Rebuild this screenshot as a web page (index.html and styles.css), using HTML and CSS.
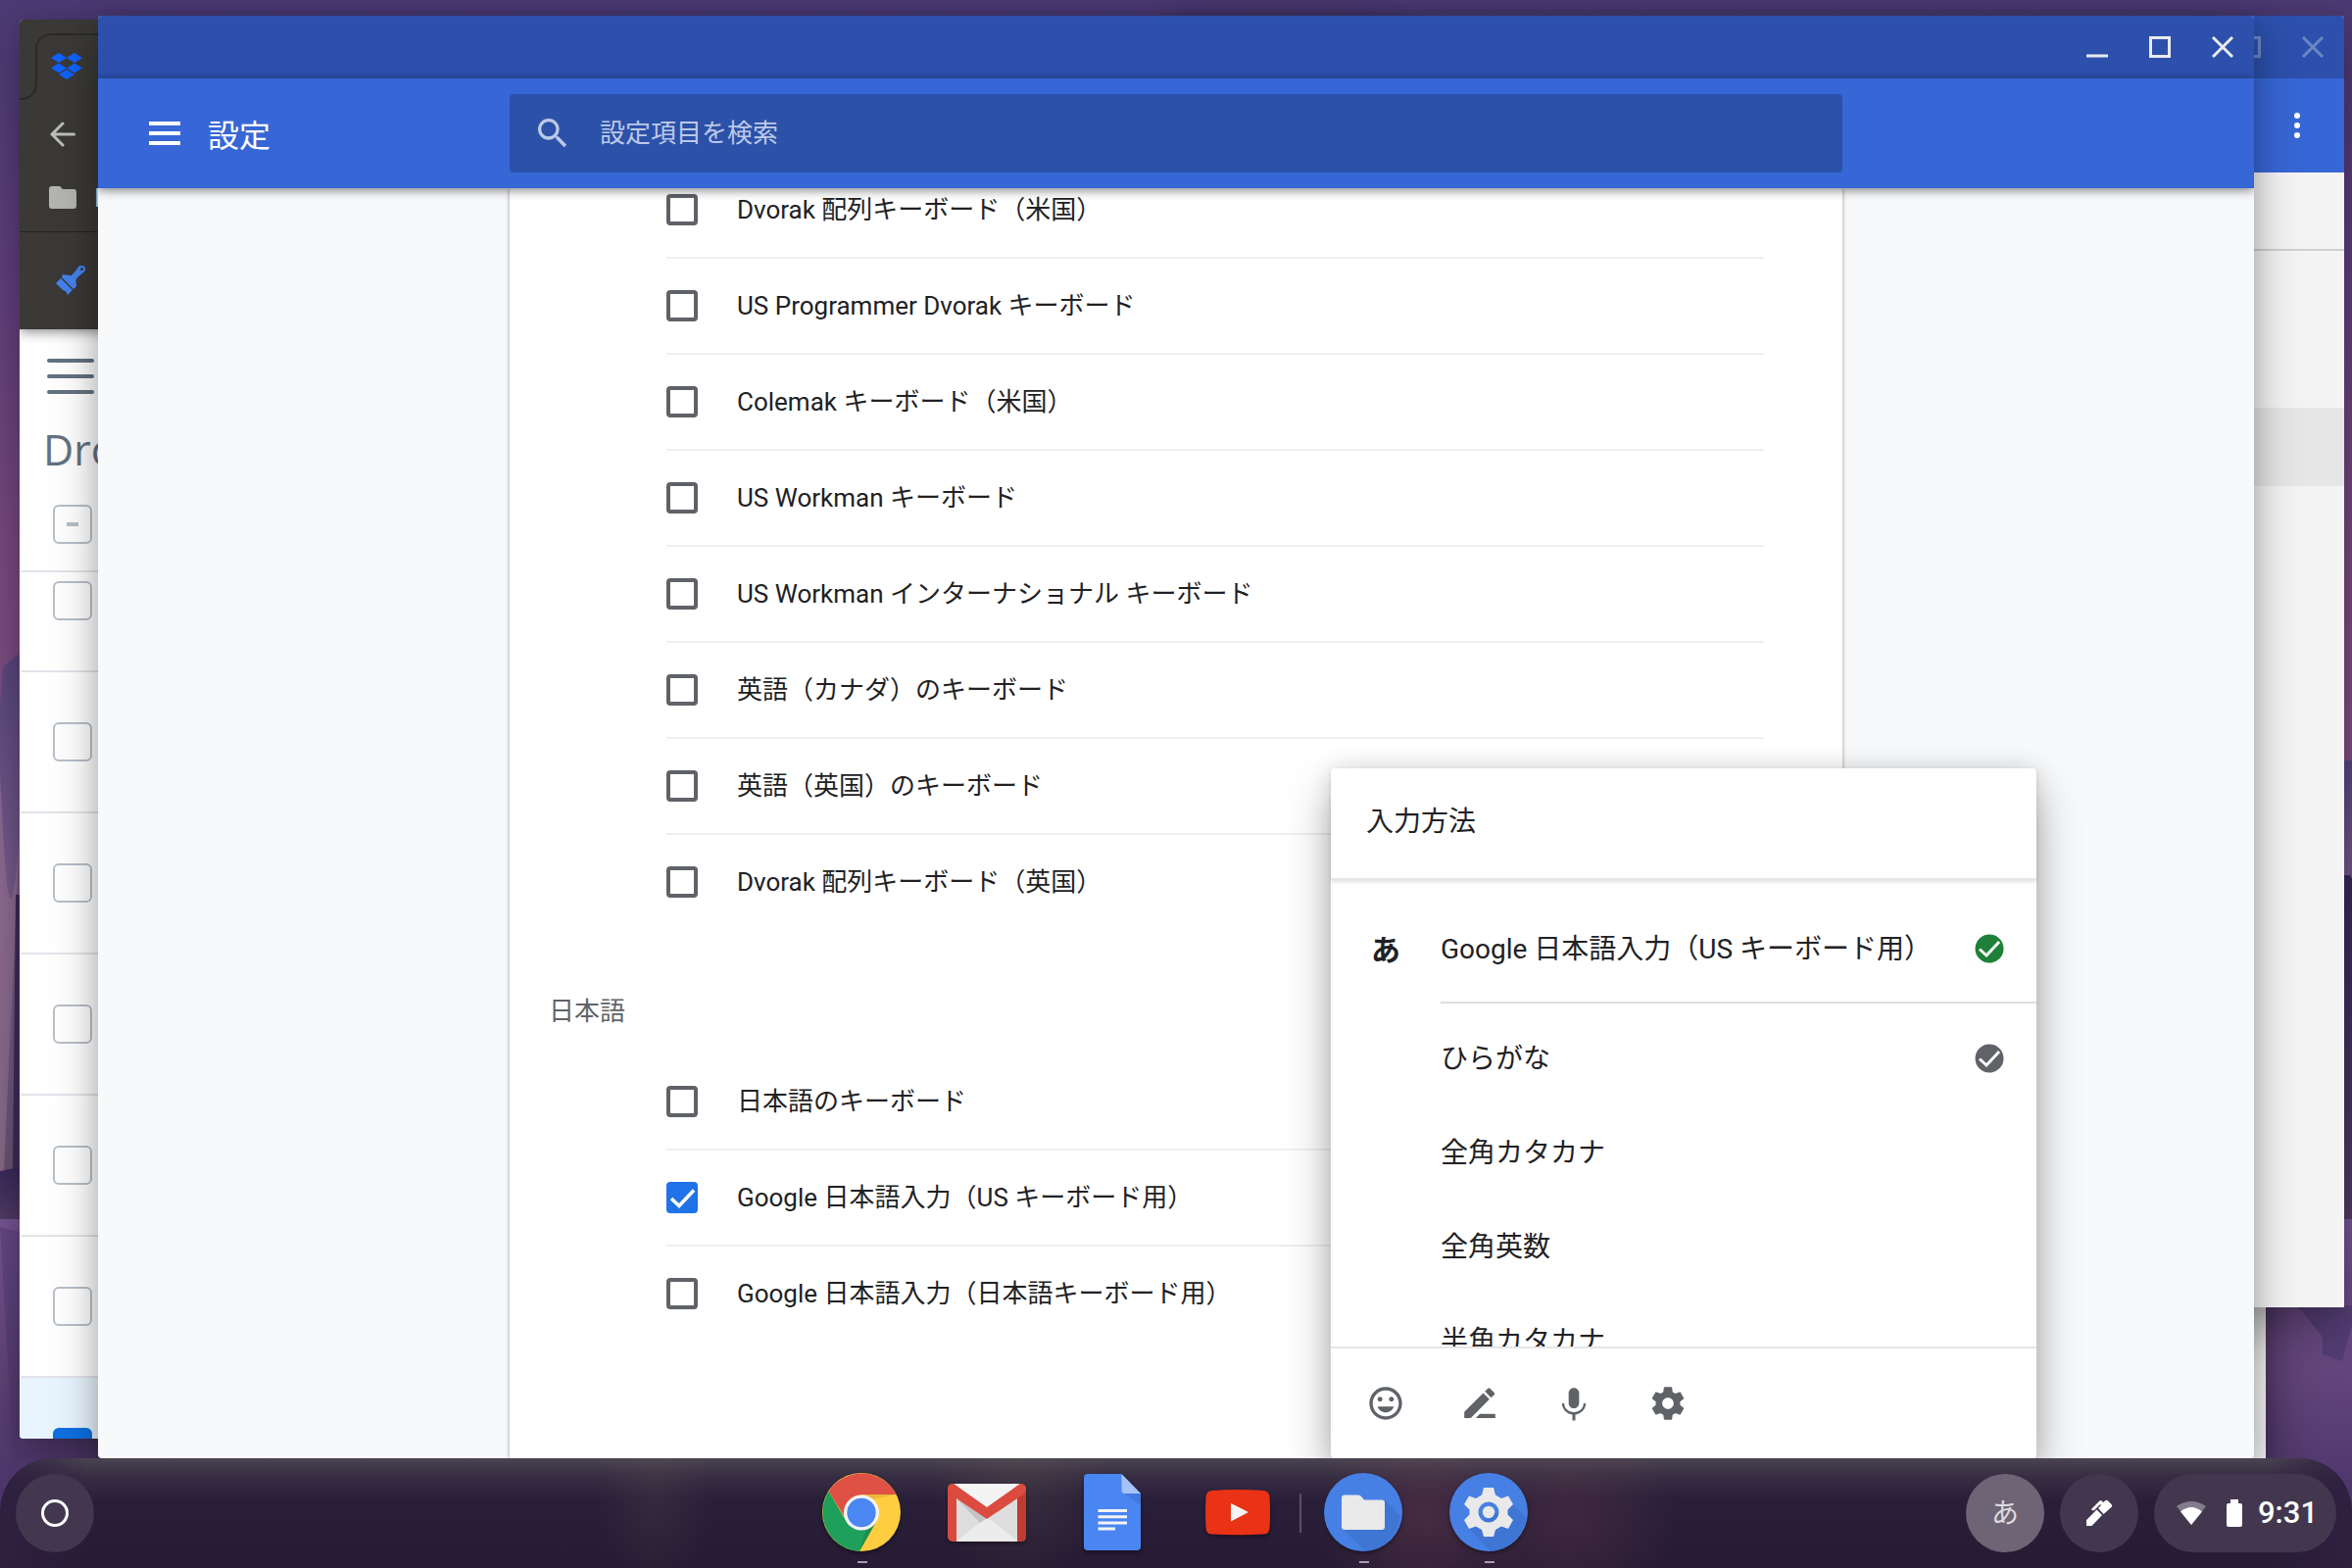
FILE: index.html
```html
<!DOCTYPE html>
<html lang="ja">

<head>
    <meta charset="UTF-8">
    <meta name="viewport" content="width=device-width, initial-scale=1.0">
    <title>設定</title>
    <link rel="stylesheet" href="styles.css">
</head>

<body>
    <div class="desktop">
        <svg class="wallpaper" viewBox="0 0 2400 1600">
            <defs>
                <linearGradient id="sky" x1="0" y1="0" x2="0" y2="1">
                    <stop offset="0" stop-color="#4b3a74" />
                    <stop offset=".2" stop-color="#64417e" />
                    <stop offset=".35" stop-color="#7a4a80" />
                    <stop offset=".5" stop-color="#824f86" />
                    <stop offset=".72" stop-color="#9d7a93" />
                </linearGradient>
                <linearGradient id="hill" x1="0" y1="0" x2="0" y2="1">
                    <stop offset="0" stop-color="#5a4780" />
                    <stop offset=".5" stop-color="#7e5f90" />
                    <stop offset="1" stop-color="#6a5472" />
                </linearGradient>
                <linearGradient id="dark" x1="0" y1="0" x2="0" y2="1">
                    <stop offset="0" stop-color="#38285a" />
                    <stop offset="1" stop-color="#523c66" />
                </linearGradient>
                <linearGradient id="lake" x1="0" y1="0" x2="0" y2="1">
                    <stop offset="0" stop-color="#7a5696" />
                    <stop offset=".45" stop-color="#62457a" />
                    <stop offset=".85" stop-color="#493369" />
                </linearGradient>
            </defs>
            <rect width="2400" height="1600" fill="url(#sky)" />
            <path d="M3 680 20 667V1195H0V720Z" fill="url(#hill)" />
            <path d="M0 790C6 900 10 980 20 850L4 1195H0Z" fill="#9d7898" opacity=".6" />
            <path d="M2380 776H2400V1100H2380Z" fill="url(#hill)" />
            <path d="M16 913H30V1195H13Z" fill="#3f2d5c" />
            <path d="M2380 893H2398L2400 897V1244H2380Z" fill="url(#dark)" />
            <path d="M0 1195 40 1187V1244H0Z" fill="url(#dark)" />
            <rect y="1244" width="2400" height="356" fill="url(#lake)" />
            <path d="M0 1252 20 1257V1490H14Z" fill="#4d3674" opacity=".4" />
            <path d="M2344 1332 2370 1364V1382L2390 1389 2400 1352V1332Z" fill="#4f3a72" opacity=".75" />
        </svg>

        <!-- Dropbox -->
        <section class="window dropbox">
            <div class="browser-top">
                <svg class="tab-line" viewBox="0 0 90 90">
                    <path d="M0 81H2A15 15 0 0 0 17 66V30A15 15 0 0 1 32 15H90" />
                </svg>
                <svg class="dropbox-logo" viewBox="0 0 32 27">
                    <path d="M8 0 16 5 8 10 0 5ZM24 0 32 5 24 10 16 5ZM8 10.4 16 15.4 8 20.4 0 15.4ZM24 10.4 32 15.4 24 20.4 16 15.4ZM16 17 24 22 16 27 8 22Z" />
                </svg>
                <svg class="back" viewBox="0 0 26 26">
                    <path d="M24.5 13H2M13 2 2 13 13 24" />
                </svg>
                <div class="bookmarks">
                    <svg viewBox="0 0 28 24">
                        <path d="M3 0H11L14 3H25A3 3 0 0 1 28 6V20A3 3 0 0 1 25 23H3A3 3 0 0 1 0 20V3A3 3 0 0 1 3 0Z" />
                    </svg>
                    <span>I</span>
                </div>
                <svg class="brush" viewBox="0 0 30 30">
                    <path fill-rule="evenodd" d="M7 9 10 9.5 14 10C16 11 17 9 22 3C23 0 27-1 29 1C31 3 30 6 27.500 7.500C22 12 20 14 20.500 16L21 21 18 24 6 12ZM25 3.500A1.500 1.500 0 1 0 28 3.500A1.500 1.500 0 1 0 25 3.500ZM5 13 17 25 12 30 10 26C8 26 6 24 4 22L0 18Z" />
                </svg>
            </div>
            <div class="dropbox-body">
                <div class="bars"><i></i><i></i><i></i></div>
                <div class="brand">Dropbox</div>
                <div class="file head"><span class="box minus"></span></div>
                <div class="file first"><span class="box"></span></div>
                <div class="file"><span class="box"></span></div>
                <div class="file"><span class="box"></span></div>
                <div class="file"><span class="box"></span></div>
                <div class="file"><span class="box"></span></div>
                <div class="file"><span class="box"></span></div>
                <div class="file selected"><span class="box on"></span></div>
            </div>
        </section>

        <section class="window plain"></section>

        <!-- ファイル -->
        <section class="window files">
            <div class="titlebar dim">
                <svg viewBox="0 0 22 22"><path d="M1.500 1.500H20.500V20.500H1.500Z" /></svg>
                <svg viewBox="0 0 22 22"><path d="M1 1 21 21M21 1 1 21" /></svg>
            </div>
            <div class="files-toolbar">
                <div class="dots"><i></i><i></i><i></i></div>
            </div>
            <div class="files-head"></div>
            <div class="files-row"></div>
        </section>

        <!-- 設定 -->
        <section class="window settings">
            <div class="titlebar">
                <svg viewBox="0 0 22 22"><path d="M0 20H22" /></svg>
                <svg viewBox="0 0 22 22"><path d="M1.500 1.500H20.500V20.500H1.500Z" /></svg>
                <svg viewBox="0 0 22 22"><path d="M1 1 21 21M21 1 1 21" /></svg>
            </div>
            <header class="toolbar">
                <div class="menu"><i></i><i></i><i></i></div>
                <h1>設定</h1>
                <div class="search">
                    <svg viewBox="0 0 24 24">
                        <path d="M15.500 14h-.79l-.28-.27A6.471 6.471 0 0 0 16 9.500 6.500 6.500 0 1 0 9.500 16c1.610 0 3.090-.59 4.230-1.570l.27.28v.79l5 4.990L20.490 19l-4.990-5zm-6 0C7.010 14 5 11.990 5 9.500S7.010 5 9.500 5 14 7.010 14 9.500 11.990 14 9.500 14z" />
                    </svg>
                    <span>設定項目を検索</span>
                </div>
            </header>
            <main class="content">
                <div class="card">
                    <ul class="list">
                        <li><span class="check"></span><label>Dvorak 配列キーボード（米国）</label></li>
                        <li><span class="check"></span><label>US Programmer Dvorak キーボード</label></li>
                        <li><span class="check"></span><label>Colemak キーボード（米国）</label></li>
                        <li><span class="check"></span><label>US Workman キーボード</label></li>
                        <li><span class="check"></span><label>US Workman インターナショナル キーボード</label></li>
                        <li><span class="check"></span><label>英語（カナダ）のキーボード</label></li>
                        <li><span class="check"></span><label>英語（英国）のキーボード</label></li>
                        <li><span class="check"></span><label>Dvorak 配列キーボード（英国）</label></li>
                    </ul>
                    <h2>日本語</h2>
                    <ul class="list">
                        <li><span class="check"></span><label>日本語のキーボード</label></li>
                        <li><span class="check checked"><svg viewBox="0 0 32 32"><path d="M5 17 13 24.500 28 8.500" /></svg></span><label>Google 日本語入力（US キーボード用）</label></li>
                        <li><span class="check"></span><label>Google 日本語入力（日本語キーボード用）</label></li>
                    </ul>
                </div>
            </main>
        </section>

        <!-- 入力方法 -->
        <section class="ime">
            <header>入力方法</header>
            <div class="ime-list">
                <div class="ime-current">
                    <b>あ</b>
                    <div class="ime-name">
                        <span>Google 日本語入力（US キーボード用）</span>
                        <svg viewBox="0 0 32 32">
                            <circle cx="16" cy="16" r="16" fill="#1e8039" />
                            <path d="M6 16.500 13 23 26 9" />
                        </svg>
                    </div>
                </div>
                <div class="ime-mode"><span>ひらがな</span>
                    <svg viewBox="0 0 32 32">
                        <circle cx="16" cy="16" r="16" fill="#5f6368" />
                        <path d="M6 16.500 13 23 26 9" />
                    </svg>
                </div>
                <div class="ime-mode"><span>全角カタカナ</span></div>
                <div class="ime-mode"><span>全角英数</span></div>
                <div class="ime-mode"><span>半角カタカナ</span></div>
            </div>
            <footer>
                <svg viewBox="0 0 24 24">
                    <path d="M11.990 2C6.470 2 2 6.480 2 12s4.470 10 9.990 10C17.520 22 22 17.520 22 12S17.520 2 11.990 2zM12 20c-4.420 0-8-3.580-8-8s3.580-8 8-8 8 3.580 8 8-3.580 8-8 8zm3.500-9c.83 0 1.500-.67 1.500-1.500S16.330 8 15.500 8 14 8.670 14 9.500s.67 1.500 1.500 1.500zm-7 0c.83 0 1.500-.67 1.500-1.500S9.330 8 8.500 8 7 8.670 7 9.500 7.670 11 8.500 11zM7 14c.8 2.200 2.700 3.600 5 3.600s4.200-1.400 5-3.600z" />
                </svg>
                <svg viewBox="0 0 24 24">
                    <path d="M2.500 17.300 14.100 5.700 17.900 9.500 6.500 21H2.500ZM15.100 4.700 17 2.800Q17.600 2.300 18.200 2.800L20.900 5.500Q21.400 6.100 20.900 6.700L18.900 8.500ZM12 18.500H21.500V21H9.500Z" />
                </svg>
                <svg viewBox="0 0 24 24">
                    <path d="M12 15c1.800 0 3.200-1.400 3.200-3.200V5.700c0-1.700-1.400-3.200-3.200-3.200S8.800 4 8.800 5.700v6.100C8.800 13.600 10.200 15 12 15zm5.900-3c0 3.200-2.700 5.400-5.900 5.400S6.100 15.200 6.100 12H4.700c0 3.600 2.900 6.400 6.400 6.900v3.600h1.800v-3.600c3.500-.5 6.400-3.300 6.400-6.900z" />
                </svg>
                <svg viewBox="0 0 24 24">
                    <path d="M19.430 12.980c.04-.32.07-.64.07-.98s-.03-.66-.07-.98l2.110-1.650c.19-.15.24-.42.12-.64l-2-3.460c-.12-.22-.39-.3-.61-.22l-2.490 1c-.52-.4-1.080-.73-1.690-.98l-.38-2.650A.488.488 0 0 0 14 2h-4c-.25 0-.46.180-.49.420l-.38 2.650c-.61.250-1.170.59-1.690.98l-2.490-1c-.23-.09-.49 0-.61.220l-2 3.460c-.13.220-.07.490.12.640l2.110 1.650c-.04.320-.07.650-.07.980s.03.660.07.980l-2.110 1.650c-.19.150-.24.420-.12.640l2 3.460c.12.220.39.300.61.220l2.490-1c.52.400 1.080.73 1.690.98l.38 2.650c.03.240.24.420.49.420h4c.25 0 .46-.18.49-.42l.38-2.650c.61-.25 1.170-.59 1.690-.98l2.490 1c.23.090.49 0 .61-.22l2-3.460c.12-.22.07-.49-.12-.64l-2.110-1.650zM12 15.500c-1.930 0-3.500-1.570-3.500-3.500s1.570-3.500 3.500-3.500 3.500 1.570 3.500 3.500-1.570 3.500-3.500 3.500z" />
                </svg>
            </footer>
        </section>

        <!-- シェルフ -->
        <nav class="shelf">
            <div class="launcher"><span></span></div>
            <div class="apps">
                <div class="app running">
                    <svg viewBox="0 0 80 80">
                        <circle cx="40" cy="40" r="40" fill="#ffcd40" />
                        <path d="M6.700 18.700 24.400 49H55.600L38 80A40 40 0 0 1 6.700 18.700Z" fill="#1fa05a" />
                        <path d="M6.700 18.700A40 40 0 0 1 75.700 22H40L22 43.500Z" fill="#df5145" />
                        <path d="M40 22H76L50 27Z" fill="#d9a52e" opacity=".5" />
                        <path d="M55 50 45 57 38 80Z" fill="#148048" opacity=".5" />
                        <circle cx="40" cy="40.500" r="18" fill="#f4f4f4" />
                        <circle cx="40" cy="40.500" r="14.700" fill="#4a87f2" />
                    </svg>
                </div>
                <div class="app">
                    <svg viewBox="0 0 80 80">
                        <rect y="11" width="80" height="59" rx="5" fill="#d94b3f" />
                        <path d="M71 16H80V65Q80 70 75 70H71Z" fill="#bf3c31" />
                        <path d="M9 16H71V70H9Z" fill="#dedede" />
                        <path d="M9 69.500 40 45 71 69.500Z" fill="#ececec" />
                        <path d="M9 26 40 46 33 51Z" fill="#c4c4c4" />
                        <path d="M6 11H74L40 36Z" fill="#f4f4f4" />
                        <path d="M0 17Q0 11 6 11L40 35 74 11Q80 11 80 17 80 20 77 22L40 47 3 22Q0 20 0 17Z" fill="#dc4b3f" />
                    </svg>
                </div>
                <div class="app">
                    <svg viewBox="0 0 80 80">
                        <path d="M15 1H49L69 21V75Q69 79 65 79H15Q11 79 11 75V5Q11 1 15 1Z" fill="#4a86f2" />
                        <path d="M52 21H69V33Z" fill="#3c72d0" opacity=".6" />
                        <path d="M49.500 1 69 21H53Q49.500 21 49.500 17.500Z" fill="#a5c3f9" />
                        <path d="M25.500 38.500H55M25.500 44.700H55M25.500 51H55M25.500 57H43" stroke="#f4f4f4" stroke-width="3" />
                    </svg>
                </div>
                <div class="app">
                    <svg viewBox="0 0 80 80">
                        <path d="M13 18Q40 16 67 18 72 19 72.500 24 73.500 40 72.500 56 72 62 67 62.500 40 64 13 62.500 8 62 7.500 56 6.500 40 7.500 24 8 19 13 18Z" fill="#e93216" />
                        <path d="M33 31 51 40 33 49.500Z" fill="#f6f6f6" />
                    </svg>
                </div>
                <span class="divider"></span>
                <div class="app running">
                    <svg viewBox="0 0 80 80">
                        <circle cx="40" cy="40" r="40" fill="#4680e4" />
                        <path d="M62 28 78 44A40 40 0 0 1 42 80L20 58Z" fill="#3b6fca" opacity=".6" />
                        <path d="M21 22.500H35Q37 22.500 38 24L41 27.500H59Q62 27.500 62 30.500V55Q62 58 59 58H21Q18 58 18 55V25.500Q18 22.500 21 22.500Z" fill="#e9e9e9" />
                    </svg>
                </div>
                <div class="app running">
                    <svg viewBox="0 0 80 80">
                        <circle cx="40" cy="40" r="40" fill="#4680e4" />
                        <path d="M64 32 79 46A40 40 0 0 1 42 80L20 57Z" fill="#3b6fca" opacity=".6" />
                        <path fill-rule="evenodd" fill="#e9e9e9" d="M35 15H45L47 22.500 53 26 60 23.500 65 32 59.500 37.500V42.500L65 48 60 57 53 54.500 47 58 45 65H35L33 58 27 54.500 20 57 15 48 20.500 42.500V37.500L15 32 20 23.500 27 26 33 22.500ZM29.500 40A10.500 10.500 0 1 0 50.500 40A10.500 10.500 0 1 0 29.500 40Z" />
                        <circle cx="40" cy="40" r="6.200" fill="#e9e9e9" />
                    </svg>
                </div>
            </div>
            <div class="tray">
                <div class="round lang">あ</div>
                <div class="round">
                    <svg viewBox="0 0 28 28">
                        <path d="M1 21 11.500 10.500 17 16 6.500 27H1ZM13 9 16 6 15 5 9 11Q7 12 6 10L14 2Q15.500 0 17 2L18 3 20 1.500Q21.500 0 23 1.500L26.500 5Q28 6.500 26.500 8L18.500 15Z" />
                    </svg>
                </div>
                <div class="status">
                    <svg class="wifi" viewBox="0 0 30 24">
                        <path d="M0 5Q15-5 30 5L15 24Z" opacity=".35" />
                        <path d="M4 10.500Q15 1.500 26 10.500L15 24Z" />
                    </svg>
                    <svg class="battery" viewBox="0 0 16 28">
                        <path d="M4 0H12V4H14Q16 4 16 6V26Q16 28 14 28H2Q0 28 0 26V6Q0 4 2 4H4Z" />
                    </svg>
                    <span>9:31</span>
                </div>
            </div>
        </nav>
    </div>
</body>

</html>
```
FILE: styles.css
```css
:root {
    --blue: #3767d6;
    --blue-dark: #2c50ac;
    --text: #212124;
    --grey: #5f6368;
    --window-shadow: 0 24px 48px rgba(0, 0, 0, .3), 0 0 24px rgba(0, 0, 0, .12);
}

* {
    margin: 0;
    padding: 0;
    box-sizing: border-box;
}

body {
    font-family: Roboto, "Noto Sans CJK JP", sans-serif;
    color: var(--text);
    background: #4b3a74;
}

svg {
    display: block;
    flex: none;
}

.desktop {
    position: relative;
    width: 2400px;
    height: 1600px;
    overflow: hidden;
}

.wallpaper {
    width: 2400px;
    height: 1600px;
}

.window {
    position: absolute;
    overflow: hidden;
    border-radius: 4px;
    box-shadow: var(--window-shadow);
}

/* Dropbox window */
.dropbox {
    left: 20px;
    top: 20px;
    width: 1400px;
    height: 1448px;
    background: #fff;
}

.browser-top {
    position: relative;
    height: 316px;
    background: #3a3937;
    box-shadow: 0 2px 12px rgba(0, 0, 0, .5);
    padding: 34px 0 0 30px;
}

.tab-line {
    position: absolute;
    left: 0;
    top: 0;
    width: 90px;
    height: 90px;
    fill: none;
    stroke: #2b2a29;
    stroke-width: 2;
}

.dropbox-logo {
    width: 32px;
    height: 27px;
    margin-left: 2px;
    fill: #0f62fe;
}

.back {
    width: 26px;
    height: 26px;
    margin: 43px 0 0 1px;
    fill: none;
    stroke: #bdbdbc;
    stroke-width: 3;
    stroke-linecap: round;
}

.bookmarks {
    display: flex;
    align-items: center;
    gap: 18px;
    height: 87px;
    margin-left: -30px;
    padding: 18px 0 0 30px;
    border-bottom: 1px solid #242423;
    color: #e8e8e8;
    font-size: 26px;
}

.bookmarks svg {
    width: 28px;
    height: 24px;
    fill: #b4b4b2;
}

.brush {
    width: 30px;
    height: 30px;
    margin: 34px 0 0 7px;
    fill: #4582ec;
}

.bars {
    display: flex;
    flex-direction: column;
    gap: 12px;
    padding: 30px 0 0 28px;
}

.bars i {
    width: 48px;
    height: 4px;
    border-radius: 2px;
    background: #637282;
}

.brand {
    height: 93px;
    padding: 27px 0 0 24px;
    font-family: "Open Sans", sans-serif;
    font-size: 43px;
    line-height: 60px;
    color: #637282;
}

.file {
    display: flex;
    align-items: center;
    height: 144px;
    margin-left: 1px;
    padding-left: 33px;
    border-bottom: 2px solid #e3e3ea;
}

.file.head {
    height: 89px;
    padding-top: 20px;
    align-items: flex-start;
}

.file.first {
    height: 102px;
    padding-top: 9px;
    align-items: flex-start;
}

.file.selected {
    align-items: flex-start;
    padding-top: 51px;
    margin-left: 0;
    padding-left: 34px;
    background: #e8f4fe;
}

.box {
    display: flex;
    align-items: center;
    justify-content: center;
    width: 40px;
    height: 40px;
    border: 2px solid #b7bfc9;
    border-radius: 6px;
}

.box.minus::before {
    content: "";
    width: 12px;
    height: 4px;
    background: #b7bfc9;
}

.box.on {
    border-color: #0f70e0;
    background: #0f70e0;
}

.plain {
    left: 1500px;
    top: 900px;
    width: 812px;
    height: 588px;
    border-radius: 0;
    background: #f5f5f5;
}

/* Files window */
.files {
    left: 1200px;
    top: 16px;
    width: 1192px;
    height: 1318px;
    border-radius: 4px 4px 0 0;
    background: #f4f4f4;
}

.titlebar {
    display: flex;
    align-items: center;
    justify-content: flex-end;
    gap: 42px;
    height: 64px;
    padding-right: 21px;
    background: var(--blue-dark);
}

.titlebar svg {
    width: 22px;
    height: 22px;
    overflow: visible;
    fill: none;
    stroke: #e9ebf0;
    stroke-width: 3;
}

.titlebar.dim svg {
    opacity: .35;
}

.files-toolbar {
    display: flex;
    justify-content: flex-end;
    height: 96px;
    padding: 35px 45px 0 0;
    background: var(--blue);
}

.dots {
    display: flex;
    flex-direction: column;
    gap: 4px;
}

.dots i {
    width: 6px;
    height: 6px;
    border-radius: 50%;
    background: #fff;
}

.files-head {
    height: 80px;
    border-bottom: 2px solid #cfcfcf;
}

.files-row {
    height: 80px;
    margin-top: 160px;
    background: #e6e6e6;
}

/* Settings window */
.settings {
    display: flex;
    flex-direction: column;
    left: 100px;
    top: 16px;
    width: 2200px;
    height: 1472px;
    background: #f8f9fb;
}

.toolbar {
    position: relative;
    display: flex;
    align-items: center;
    flex: none;
    height: 112px;
    padding-left: 52px;
    background: var(--blue);
    box-shadow: 0 2px 10px rgba(0, 0, 0, .5);
}

.menu {
    display: flex;
    flex-direction: column;
    gap: 6px;
    width: 32px;
}

.menu i {
    height: 4px;
    background: #fff;
}

.toolbar h1 {
    width: 336px;
    padding-left: 28px;
    font-size: 32px;
    font-weight: 400;
    color: #fff;
}

.search {
    display: flex;
    align-items: center;
    width: 1360px;
    height: 80px;
    padding-left: 24px;
    border-radius: 4px;
    background: #2c51a8;
    font-size: 26px;
    color: #bcc9e8;
}

.search svg {
    width: 40px;
    height: 40px;
    margin-right: 28px;
    fill: #bcc9e8;
}

.search span {
    padding-bottom: 5px;
}

.content {
    flex: 1;
    display: flex;
    justify-content: center;
    overflow: hidden;
}

.card {
    width: 1360px;
    background: #fff;
    box-shadow: 0 0 4px rgba(0, 0, 0, .4);
}

.list {
    margin-left: 160px;
    width: 1120px;
    list-style: none;
    font-size: 26px;
}

.list:first-child {
    margin-top: -28px;
}

.list li {
    display: flex;
    align-items: center;
    gap: 40px;
    height: 98px;
    border-top: 2px solid #efefef;
}

.list li:first-child {
    border-top-color: transparent;
}

.list label {
    padding-bottom: 5px;
}

.check {
    width: 32px;
    height: 32px;
    border: 4px solid var(--grey);
    border-radius: 4px;
}

.check.checked {
    border: none;
    background: #1f72e8;
}

.check svg {
    fill: none;
    stroke: #fff;
    stroke-width: 3.6;
}

.card h2 {
    height: 126px;
    padding: 64px 0 0 40px;
    font-size: 26px;
    line-height: 40px;
    font-weight: 400;
    color: var(--grey);
}

/* Input method menu */
.ime {
    position: absolute;
    left: 1358px;
    top: 784px;
    width: 720px;
    height: 704px;
    display: flex;
    flex-direction: column;
    border-radius: 4px;
    background: #fff;
    box-shadow: var(--window-shadow);
    font-size: 28px;
}

.ime header {
    display: flex;
    align-items: center;
    height: 114px;
    padding: 0 36px 8px;
    border-bottom: 2px solid #e6e6e6;
    box-shadow: 0 2px 4px rgba(0, 0, 0, .12);
}

.ime-list {
    height: 476px;
    overflow: hidden;
}

.ime-list span {
    padding-bottom: 4px;
}

.ime svg {
    width: 32px;
    height: 32px;
    fill: none;
    stroke: #fff;
    stroke-width: 3;
}

.ime-current {
    display: flex;
    align-items: center;
    height: 126px;
    padding-left: 41px;
}

.ime-current b {
    width: 71px;
    padding-top: 11px;
    font-size: 30px;
}

.ime-name {
    flex: 1;
    display: flex;
    align-items: center;
    justify-content: space-between;
    height: 126px;
    padding: 16px 32px 0 0;
    border-bottom: 2px solid #dedede;
}

.ime-mode {
    display: flex;
    align-items: center;
    justify-content: space-between;
    height: 96px;
    padding: 0 32px 0 112px;
}

.ime-current + .ime-mode {
    margin-top: 8px;
}

.ime footer {
    display: flex;
    align-items: center;
    gap: 56px;
    height: 114px;
    padding: 0 0 0 36px;
    border-top: 2px solid #e6e6e6;
}

.ime footer svg {
    width: 40px;
    height: 40px;
    fill: var(--grey);
    stroke: none;
}

/* Shelf */
.shelf {
    position: absolute;
    left: 0;
    bottom: 0;
    display: flex;
    justify-content: space-between;
    width: 2400px;
    height: 112px;
    padding: 16px;
    border-radius: 54px 54px 0 0;
    background:
        radial-gradient(ellipse 60px 100px at 668px 40px, rgba(110, 95, 85, .16), transparent),
        radial-gradient(ellipse 90px 100px at 1040px 30px, rgba(110, 95, 75, .22), transparent),
        radial-gradient(ellipse 110px 110px at 1455px 60px, rgba(125, 70, 85, .34), transparent),
        radial-gradient(ellipse 110px 110px at 1600px 60px, rgba(125, 70, 85, .26), transparent),
        linear-gradient(90deg, #2f2040 0, transparent 90px, transparent 2310px, #2f2040 100%),
        linear-gradient(#4a4452 0, #372e43 18px, #2a1f39 42px, #271b34 100%);
}

.launcher,
.round {
    display: flex;
    align-items: center;
    justify-content: center;
    width: 80px;
    height: 80px;
    border-radius: 50%;
    background: #42374f;
}

.launcher span {
    width: 28px;
    height: 28px;
    border: 3px solid #fff;
    border-radius: 50%;
}

.apps {
    display: flex;
    gap: 48px;
    margin: -1px 0 0 295px;
}

.app {
    position: relative;
    width: 80px;
    height: 80px;
}

.app svg {
    width: 80px;
    height: 80px;
    filter: drop-shadow(0 2px 2px rgba(0, 0, 0, .4));
}

.app.running::after {
    content: "";
    position: absolute;
    left: 36px;
    top: 90px;
    width: 10px;
    height: 2px;
    background: #a49fab;
}

.divider {
    width: 2px;
    height: 40px;
    margin: 21px -25px 0;
    background: #5b5265;
}

.tray {
    display: flex;
    gap: 16px;
}

.round svg {
    width: 28px;
    height: 28px;
    fill: #fff;
}

.round.lang {
    padding-bottom: 4px;
    background: #6d6575;
    font-size: 28px;
    color: #dedbe0;
}

.status {
    display: flex;
    align-items: center;
    width: 186px;
    height: 80px;
    padding-left: 23px;
    border-radius: 40px;
    background: #42374f;
    font-size: 31px;
    font-weight: 500;
    color: #fff;
}

.status span {
    padding-bottom: 2px;
}

.wifi {
    width: 30px;
    height: 24px;
    margin-right: 21px;
    fill: #fff;
}

.battery {
    width: 16px;
    height: 28px;
    margin-right: 16px;
    fill: #fff;
}
```
